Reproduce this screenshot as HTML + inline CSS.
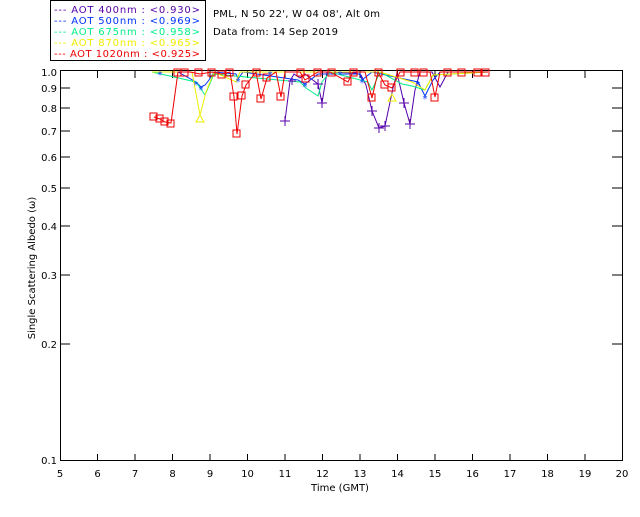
<!DOCTYPE html>
<html><head><style>
body{margin:0;background:#fff;width:640px;height:512px;overflow:hidden}
text{font-family:"DejaVu Sans","Liberation Sans",sans-serif;font-size:10px}
</style></head><body>
<svg width="640" height="512" xmlns="http://www.w3.org/2000/svg">
<rect x="50.5" y="0.5" width="155" height="60" fill="none" stroke="#000"/>
<g font-size="10">
<text x="54" y="13" fill="#5500aa" textLength="146" lengthAdjust="spacing">---  AOT  400nm : &lt;0.930&gt;</text>
<text x="54" y="24" fill="#0033ff" textLength="146" lengthAdjust="spacing">---  AOT  500nm : &lt;0.969&gt;</text>
<text x="54" y="35" fill="#00ee88" textLength="146" lengthAdjust="spacing">---  AOT  675nm : &lt;0.958&gt;</text>
<text x="54" y="46" fill="#eeee00" textLength="146" lengthAdjust="spacing">---  AOT  870nm : &lt;0.965&gt;</text>
<text x="54" y="57" fill="#ee0000" textLength="146" lengthAdjust="spacing">---  AOT 1020nm : &lt;0.925&gt;</text>
</g>
<text x="213" y="17" textLength="167" lengthAdjust="spacing">PML, N 50 22', W 04 08', Alt 0m</text>
<text x="213" y="35" textLength="125" lengthAdjust="spacing">Data from: 14 Sep 2019</text>
<g stroke="#000" fill="none">
<rect x="60.5" y="70.5" width="562" height="390"/>
<path d="M97.5 461v-7M135 461v-7M172.5 461v-7M210 461v-7M247.5 461v-7M285 461v-7M322.5 461v-7M360 461v-7M397.5 461v-7M435 461v-7M472.5 461v-7M510 461v-7M547.5 461v-7M585 461v-7
M97.5 71v7M135 71v7M172.5 71v7M210 71v7M247.5 71v7M285 71v7M322.5 71v7M360 71v7M397.5 71v7M435 71v7M472.5 71v7M510 71v7M547.5 71v7M585 71v7
M60 88h10M60 108h10M60 131h10M60 157h10M60 188h10M60 226h10M60 275h10M60 344h10
M622 88h-10M622 108h-10M622 131h-10M622 157h-10M622 188h-10M622 226h-10M622 275h-10M622 344h-10"/>
</g>
<g text-anchor="end">
<text x="57" y="76">1.0</text><text x="57" y="92">0.9</text><text x="57" y="112">0.8</text><text x="57" y="135">0.7</text><text x="57" y="161">0.6</text><text x="57" y="192">0.5</text><text x="57" y="230">0.4</text><text x="57" y="279">0.3</text><text x="57" y="348">0.2</text><text x="57" y="464">0.1</text>
</g>
<g text-anchor="middle">
<text x="60" y="477">5</text><text x="97.5" y="477">6</text><text x="135" y="477">7</text><text x="172.5" y="477">8</text><text x="210" y="477">9</text><text x="247.5" y="477">10</text><text x="285" y="477">11</text><text x="322.5" y="477">12</text><text x="360" y="477">13</text><text x="397.5" y="477">14</text><text x="435" y="477">15</text><text x="472.5" y="477">16</text><text x="510" y="477">17</text><text x="547.5" y="477">18</text><text x="585" y="477">19</text><text x="622" y="477">20</text>
<text x="340" y="491">Time (GMT)</text>
</g>
<text transform="translate(35,268) rotate(-90)" text-anchor="middle">Single Scattering Albedo (ω)</text>
<g fill="none" stroke-width="1">
<polyline stroke="#5500aa" points="285,121 290,81 294,74 300,78 305,74 318,84 322,103 327,72 356,73 361,75 366,85 372,111 379,128 385,126 393,88 397,73 404,103 410,124 415,90 420,72 432,72 440,87 448,72 470,72 488,72"/>
<polyline stroke="#0033ff" points="152,72 178,72 196,82 201,87 205,85 209,80 214,72 236,74 238,79 243,72 298,80 305,84 318,74 360,74 362,80 372,72 418,82 425,96 433,80 440,72 488,72"/>
<polyline stroke="#00ee88" points="152,72 196,82 205,95 214,74 300,82 306,88 318,96 322,82 330,72 368,82 372,90 380,72 402,84 412,86 425,90 433,75 488,72"/>
<polyline stroke="#eeee00" points="152,72 192,72 200,115 206,92 214,72 236,82 240,72 380,72 412,82 425,90 433,75 488,72"/>
<polyline stroke="#ee0000" points="154,117 160,119 165,122 171,123 178,72 190,72 200,74 212,72 222,74 230,72 234,97 237,134 242,96 246,85 256,72 261,99 267,78 276,72 281,97 285,72 290,72 300,72 305,80 318,72 330,72 348,82 353,72 365,72 372,98 378,72 385,85 392,88 400,72 416,72 430,72 435,97 440,72 488,72"/>
</g>
<g fill="none" stroke="#ee0000">
<rect x="150" y="113" width="7" height="7"/><rect x="156" y="115" width="7" height="7"/><rect x="161" y="118" width="7" height="7"/><rect x="167" y="120" width="7" height="7"/>
<rect x="174" y="69" width="7" height="7"/><rect x="181" y="69" width="7" height="7"/><rect x="195" y="69" width="7" height="7"/><rect x="208" y="69" width="7" height="7"/><rect x="218" y="71" width="7" height="7"/><rect x="226" y="69" width="7" height="7"/>
<rect x="230" y="93" width="7" height="7"/><rect x="233" y="130" width="7" height="7"/><rect x="238" y="92" width="7" height="7"/><rect x="242" y="81" width="7" height="7"/>
<rect x="253" y="69" width="7" height="7"/><rect x="257" y="95" width="7" height="7"/><rect x="263" y="74" width="7" height="7"/><rect x="277" y="93" width="7" height="7"/>
<rect x="297" y="69" width="7" height="7"/><rect x="302" y="75" width="7" height="7"/><rect x="314" y="69" width="7" height="7"/><rect x="328" y="69" width="7" height="7"/><rect x="344" y="78" width="7" height="7"/><rect x="350" y="69" width="7" height="7"/>
<rect x="368" y="94" width="7" height="7"/><rect x="375" y="69" width="7" height="7"/><rect x="381" y="81" width="7" height="7"/><rect x="388" y="84" width="7" height="7"/><rect x="397" y="69" width="7" height="7"/><rect x="411" y="69" width="7" height="7"/><rect x="420" y="69" width="7" height="7"/><rect x="431" y="94" width="7" height="7"/><rect x="444" y="69" width="7" height="7"/><rect x="458" y="69" width="7" height="7"/><rect x="474" y="69" width="7" height="7"/><rect x="482" y="69" width="7" height="7"/>
</g>
<g stroke="#5500aa">
<path d="M280 121h10M285 116v10M367 111h10M372 106v10M374 128h10M379 123v10M380 126h10M385 121v10M399 103h10M404 98v10M405 124h10M410 119v10M317 103h10M322 98v10M288 81h8M292 77v8M313 84h10M318 79v10"/>
</g>
<g fill="#0033ff" font-size="12" text-anchor="middle">
<text x="196" y="88">*</text><text x="201" y="93">*</text><text x="238" y="85">*</text><text x="305" y="90">*</text><text x="362" y="86">*</text><text x="418" y="88">*</text><text x="425" y="102">*</text><text x="160" y="78">*</text><text x="270" y="78">*</text><text x="340" y="78">*</text>
</g>
<path d="M200 115l-4 7h8z M392 94l-4 7h8z" fill="none" stroke="#eeee00"/>
</svg>
</body></html>
